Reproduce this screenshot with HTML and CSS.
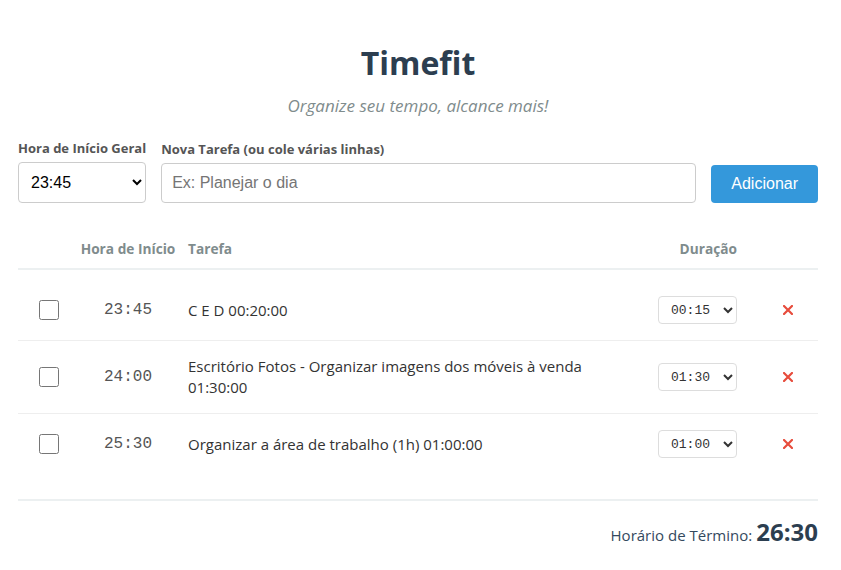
FILE: index.html
```html
<!DOCTYPE html>
<html lang="pt-BR">
<head>
<meta charset="utf-8">
<title>Timefit</title>
<link rel="stylesheet" href="styles.css">
</head>
<body>
<div class="app">
  <header class="hero">
    <h1 class="title">Timefit</h1>
    <p class="subtitle">Organize seu tempo, alcance mais!</p>
  </header>

  <form class="add-form">
    <div class="field field-start">
      <label class="field-label">Hora de Início Geral</label>
      <select class="start-select">
        <option>23:45</option>
      </select>
    </div>
    <div class="field field-task">
      <label class="field-label">Nova Tarefa (ou cole várias linhas)</label>
      <input class="task-input" type="text" placeholder="Ex: Planejar o dia">
    </div>
    <button type="button" class="add-btn">Adicionar</button>
  </form>

  <div class="list-head">
    <span class="col-check"></span>
    <span class="col-time">Hora de Início</span>
    <span class="col-task">Tarefa</span>
    <span class="col-dur">Duração</span>
    <span class="col-del"></span>
  </div>

  <div class="task-list">
    <div class="task-row">
      <span class="col-check"><input type="checkbox" class="check"></span>
      <span class="col-time mono">23:45</span>
      <span class="col-task">C E D 00:20:00</span>
      <span class="col-dur"><select class="dur-select"><option>00:15</option></select></span>
      <span class="col-del"><button type="button" class="del-btn" aria-label="Remover"><svg width="10" height="10" viewBox="0 0 10 10"><path d="M1 1 L9 9 M9 1 L1 9" stroke="#e74c3c" stroke-width="2.2" stroke-linecap="square"/></svg></button></span>
    </div>
    <div class="task-row">
      <span class="col-check"><input type="checkbox" class="check"></span>
      <span class="col-time mono">24:00</span>
      <span class="col-task">Escritório Fotos - Organizar imagens dos móveis à venda 01:30:00</span>
      <span class="col-dur"><select class="dur-select"><option>01:30</option></select></span>
      <span class="col-del"><button type="button" class="del-btn" aria-label="Remover"><svg width="10" height="10" viewBox="0 0 10 10"><path d="M1 1 L9 9 M9 1 L1 9" stroke="#e74c3c" stroke-width="2.2" stroke-linecap="square"/></svg></button></span>
    </div>
    <div class="task-row">
      <span class="col-check"><input type="checkbox" class="check"></span>
      <span class="col-time mono">25:30</span>
      <span class="col-task">Organizar a área de trabalho (1h) 01:00:00</span>
      <span class="col-dur"><select class="dur-select"><option>01:00</option></select></span>
      <span class="col-del"><button type="button" class="del-btn" aria-label="Remover"><svg width="10" height="10" viewBox="0 0 10 10"><path d="M1 1 L9 9 M9 1 L1 9" stroke="#e74c3c" stroke-width="2.2" stroke-linecap="square"/></svg></button></span>
    </div>
  </div>

  <footer class="summary">
    <span class="summary-label">Horário de Término:</span>
    <strong class="summary-value">26:30</strong>
  </footer>
</div>
</body>
</html>
```

FILE: styles.css
```css
* { box-sizing: border-box; }

body {
  margin: 0;
  background: #ffffff;
  font-family: "Open Sans", "Noto Sans", sans-serif;
  color: #333333;
}

.app {
  width: 800px;
  margin: 0 0 0 18px;
  padding-top: 40px;
}

.hero { text-align: center; }

.title {
  margin: 0;
  font-size: 32px;
  font-weight: 700;
  color: #2c3e50;
  line-height: 45px;
}

.subtitle {
  margin: 10px 0 0;
  font-size: 17px;
  font-style: italic;
  color: #7f8c8d;
  line-height: 22px;
}

.add-form {
  display: flex;
  align-items: flex-end;
  gap: 15px;
  margin-top: 22px;
  margin-bottom: 27px;
}

.field { display: flex; flex-direction: column; }
.field-task { flex: 1; }

.field-label {
  font-size: 13px;
  font-weight: 700;
  color: #555555;
  line-height: 18px;
  margin-bottom: 5px;
  white-space: nowrap;
}

.start-select {
  height: 41px;
  padding: 0 8px;
  font-family: "Liberation Sans", Arial, sans-serif;
  font-size: 16px;
  color: #000;
  border: 1px solid #cccccc;
  border-radius: 4px;
  background: #fff;
}

.task-input {
  height: 40px;
  padding: 0 10px;
  font-family: "Liberation Sans", Arial, sans-serif;
  font-size: 16px;
  border: 1px solid #cccccc;
  border-radius: 4px;
  outline: none;
}
.task-input::placeholder { color: #757575; }

.add-btn {
  height: 38px;
  padding: 0 20px;
  font-family: "Liberation Sans", Arial, sans-serif;
  font-size: 16px;
  color: #ffffff;
  background: #3498db;
  border: none;
  border-radius: 4px;
}

.list-head,
.task-row {
  display: grid;
  grid-template-columns: 61px 98px 1fr 79px 81px;
  align-items: center;
}

.list-head {
  padding: 10px 0;
  font-size: 13.7px;
  font-weight: 700;
  color: #7f8c8d;
  line-height: 18px;
  border-bottom: 2px solid #ecf0f1;
}

.col-check { display: flex; justify-content: center; }
.col-time { text-align: center; white-space: nowrap; }
.col-task { padding-left: 11px; padding-right: 24px; }
.col-dur { display: flex; justify-content: flex-end; text-align: right; white-space: nowrap; }
.col-del { display: flex; justify-content: center; padding-left: 20px; }

.task-list { padding: 10px 0; }

.task-row {
  padding: 15px 0;
  border-bottom: 1px solid #eeeeee;
  font-size: 15px;
  line-height: 21px;
  color: #333333;
}
.task-row:last-child { border-bottom: none; }

.check {
  width: 20px;
  height: 20px;
  margin: 0;
}

.mono {
  font-family: "Liberation Mono", "Courier New", monospace;
  font-size: 16px;
  color: #555555;
}

.dur-select {
  width: 79px;
  height: 28px;
  padding: 0 4px 0 8px;
  font-family: "Liberation Mono", "Courier New", monospace;
  font-size: 13px;
  color: #333;
  border: 1px solid #dddddd;
  border-radius: 4px;
  background: #fff;
}

.del-btn {
  width: 30px;
  height: 30px;
  padding: 0;
  border: none;
  background: transparent;
  display: flex;
  align-items: center;
  justify-content: center;
}

.summary {
  margin-top: 15px;
  border-top: 2px solid #ecf0f1;
  padding-top: 14px;
  text-align: right;
  color: #34495e;
}

.summary-label { font-size: 15px; }

.summary-value {
  font-size: 24px;
  font-weight: 700;
  color: #2c3e50;
}
```
